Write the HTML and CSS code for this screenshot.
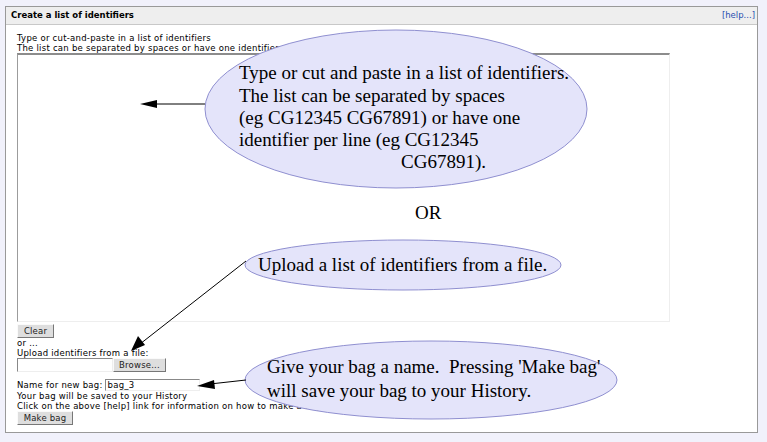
FILE: index.html
```html
<!DOCTYPE html>
<html>
<head>
<meta charset="utf-8">
<link rel="stylesheet" href="styles.css">
</head>
<body>
<div class="panel">
  <div class="panel-head">
    <span class="title">Create a list of identifiers</span>
    <a class="help">[help...]</a>
  </div>
  <div class="panel-body">
    <div class="line">Type or cut-and-paste in a list of identifiers</div>
    <div class="line">The list can be separated by spaces or have one identifier per line</div>
    <textarea class="ids"></textarea>
    <div class="row"><button class="btn btn-clear">Clear</button></div>
    <div class="line">or ...</div>
    <div class="line">Upload identifiers from a file:</div>
    <div class="file-row"><span class="file-field"></span><button class="btn btn-browse">Browse...</button></div>
    <div class="name-row">Name for new bag: <span class="name-field">bag_3</span></div>
    <div class="line">Your bag will be saved to your History</div>
    <div class="line">Click on the above [help] link for information on how to make a bag</div>
    <div class="row"><button class="btn btn-make">Make bag</button></div>
  </div>
</div>
<svg class="overlay" width="767" height="442" viewBox="0 0 767 442">
  <g class="bubble">
    <ellipse cx="396" cy="109" rx="191" ry="79"/>
    <ellipse cx="403" cy="265" rx="158" ry="25"/>
    <ellipse cx="431" cy="380" rx="186" ry="39"/>
  </g>
  <g class="arrows">
    <line x1="205" y1="104" x2="152" y2="104"/>
    <polygon points="140,104 157,100 157,108"/>
    <line x1="246" y1="261" x2="140" y2="344"/>
    <polygon points="131,351 138,336 145,345"/>
    <line x1="246" y1="380" x2="210" y2="384"/>
    <polygon points="197,386 214,380 215,389"/>
  </g>
  <g class="notes">
    <text x="239" y="79">Type or cut and paste in a list of identifiers.</text>
    <text x="239" y="102">The list can be separated by spaces</text>
    <text x="239" y="124">(eg CG12345 CG67891) or have one</text>
    <text x="239" y="146">identifier per line (eg CG12345</text>
    <text x="401" y="168">CG67891).</text>
    <text x="415" y="219">OR</text>
    <text x="258" y="271">Upload a list of identifiers from a file.</text>
    <text x="267" y="373">Give your bag a name.  Pressing 'Make bag'</text>
    <text x="267" y="397">will save your bag to your History.</text>
  </g>
</svg>
</body>
</html>
```

FILE: styles.css
```css
html, body {
  margin: 0;
  padding: 0;
}
body {
  background: #f1f1fb;
  font-family: "DejaVu Sans", sans-serif;
  font-size: 8.5px;
  letter-spacing: 0.25px;
  color: #000;
  width: 767px;
  height: 442px;
  overflow: hidden;
  position: relative;
}
.panel {
  margin: 6px 0 0 5px;
  width: 753px;
  height: 427px;
  box-sizing: border-box;
  border: 1px solid #999;
  background: #fff;
}
.panel-head {
  height: 18px;
  box-sizing: border-box;
  background: #eeeeee;
  border-bottom: 1px solid #c8c8c8;
  display: flex;
  justify-content: space-between;
  align-items: center;
  padding: 0 2px 2px 5px;
  letter-spacing: 0;
}
.title {
  font-weight: bold;
  font-size: 8.5px;
}
.help {
  color: #2a4fb0;
  font-size: 8.5px;
}
.panel-body {
  padding: 8px 0 0 11px;
  display: flex;
  flex-direction: column;
  align-items: flex-start;
}
.line {
  line-height: 10px;
  white-space: nowrap;
}
.ids {
  display: block;
  width: 653px;
  height: 269px;
  box-sizing: border-box;
  margin: 0;
  padding: 0;
  resize: none;
  background: #fff;
  border-top: 2px solid #8c8c8c;
  border-left: 1px solid #9c9c9c;
  border-right: 1px solid #eeeeee;
  border-bottom: 1px solid #eeeeee;
  outline: none;
}
.row {
  display: flex;
}
.btn {
  font-family: "DejaVu Sans", sans-serif;
  font-size: 8.5px;
  letter-spacing: 0.2px;
  height: 14px;
  padding: 0 4px;
  margin: 0;
  box-sizing: border-box;
  background: #dedede;
  color: #222;
  border: 1px solid;
  border-color: #fafafa #777 #777 #fafafa;
  line-height: 11px;
}
.btn-clear {
  margin-top: 2px;
  width: 37px;
}
.file-row {
  display: flex;
}
.file-field {
  width: 96px;
  height: 14px;
  box-sizing: border-box;
  border: 1px solid #888;
  border-color: #888 #eee #eee #888;
  background: #fff;
}
.btn-browse {
  width: 53px;
}
.name-row {
  margin-top: 7px;
  display: flex;
  align-items: center;
  line-height: 12px;
  white-space: nowrap;
}
.name-field {
  display: inline-block;
  width: 95px;
  height: 12px;
  box-sizing: border-box;
  margin-left: 2px;
  padding-left: 2px;
  border: 1px solid;
  border-color: #888 #eee #eee #888;
  line-height: 10px;
}
.btn-make {
  width: 56px;
}
.overlay {
  position: absolute;
  left: 0;
  top: 0;
  pointer-events: none;
}
.bubble ellipse {
  fill: #e4e4fa;
  stroke: #8f8fd0;
  stroke-width: 1;
}
.arrows line {
  stroke: #000;
  stroke-width: 1;
}
.arrows polygon {
  fill: #000;
}
.notes text {
  font-family: "Liberation Serif", serif;
  font-size: 19px;
  letter-spacing: 0;
  fill: #000;
  white-space: pre;
}
```
